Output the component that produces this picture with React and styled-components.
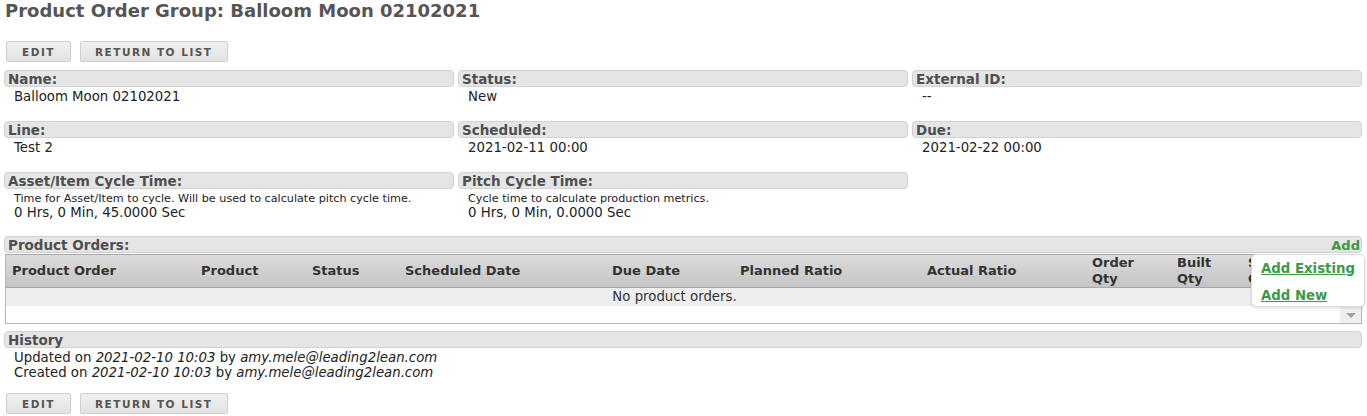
import React from "react";
import styled, { createGlobalStyle } from "styled-components";

const Global = createGlobalStyle`
  html, body { margin: 0; padding: 0; background: #fff; }
  body { font-family: "DejaVu Sans", Verdana, sans-serif; color: #222; }
`;

const Page = styled.div`
  padding: 0 5px 0 4px;
  width: 1358px;
`;

const Title = styled.h1`
  margin: 0;
  padding: 0 0 0 1px;
  font-size: 18px;
  line-height: 22px;
  font-weight: bold;
  color: #555;
`;

const ButtonBar = styled.div`
  display: flex;
  gap: 9px;
  padding-left: 2px;
  margin-top: ${(p) => p.$top}px;
`;

const Button = styled.button`
  height: 21px;
  padding: 0 ${(p) => p.$pad}px;
  border: 1px solid #cfcfcf;
  border-radius: 2px;
  background: linear-gradient(#f0f0f0, #e2e2e2);
  font-family: "DejaVu Sans", Verdana, sans-serif;
  font-size: 10.5px;
  font-weight: bold;
  letter-spacing: 1.5px;
  color: #555;
  cursor: pointer;
`;

const FieldGrid = styled.div`
  display: grid;
  grid-template-columns: repeat(3, 450px);
  column-gap: 4px;
  row-gap: 16px;
  margin-top: 8px;
`;

const Field = styled.div`
  display: flex;
  flex-direction: column;
`;

const Label = styled.div`
  height: 17px;
  box-sizing: border-box;
  border: 1px solid #d2d2d2;
  border-radius: 4px;
  background: #e5e5e5;
  padding: 1px 0 0 3px;
  font-size: 13.5px;
  font-weight: bold;
  line-height: 15px;
  color: #4f4f4f;
  display: flex;
  align-items: center;
  justify-content: space-between;
`;

const Hint = styled.div`
  padding-left: 10px;
  margin-top: 3px;
  font-size: 11.2px;
  line-height: 13px;
  color: #222;
`;

const Value = styled.div`
  padding-left: 10px;
  font-size: 13.3px;
  line-height: 16px;
  color: #222;
  margin-top: ${(p) => (p.$tight ? 0 : 2)}px;
`;

const Section = styled.div`
  position: relative;
  margin-top: ${(p) => p.$top}px;
`;

const AddLink = styled.span`
  color: #3a9a4a;
  font-weight: bold;
  font-size: 13px;
  padding-right: 1px;
  cursor: pointer;
`;

const TableBox = styled.div`
  margin-top: 1px;
  border-left: 1px solid #b5b5b5;
  border-right: 1px solid #b5b5b5;
  border-bottom: 1px solid #b5b5b5;
  margin-left: 1px;
`;

const cols = "189px 111px 93px 207px 128px 187px 165px 85px 71px 1fr";

const HeadRow = styled.div`
  display: grid;
  grid-template-columns: ${cols};
  height: 34px;
  box-sizing: border-box;
  border-top: 1px solid #a8a8a8;
  border-bottom: 1px solid #a8a8a8;
  background: linear-gradient(#dcdcdc, #c4c4c4);
`;

const HeadCell = styled.div`
  padding-left: 6px;
  display: flex;
  align-items: center;
  font-size: 13px;
  font-weight: bold;
  line-height: 16px;
  color: #333;
`;

const EmptyRow = styled.div`
  height: 19px;
  box-sizing: border-box;
  background: #eee;
  border-bottom: 1px solid #fff;
  padding-right: 18px;
  text-align: center;
  font-size: 13.3px;
  line-height: 18px;
  color: #333;
`;

const Filler = styled.div`
  height: 16px;
  display: flex;
  justify-content: flex-end;
`;

const ScrollBtn = styled.div`
  width: 21px;
  background: #efefef;
  display: flex;
  align-items: center;
  justify-content: center;
`;

const Arrow = styled.div`
  width: 0;
  height: 0;
  border-left: 5px solid transparent;
  border-right: 5px solid transparent;
  border-top: 5px solid #a3a3a3;
`;

const Menu = styled.div`
  position: absolute;
  top: 18px;
  right: -3px;
  width: 114px;
  height: 53px;
  box-sizing: border-box;
  background: #fff;
  border: 1px solid #dcdcdc;
  border-radius: 5px;
  box-shadow: 0 1px 3px rgba(0, 0, 0, 0.12);
  padding: 6px 0 0 9px;
  display: flex;
  flex-direction: column;
  gap: 11px;
`;

const MenuItem = styled.a`
  color: #3a9a4a;
  font-weight: bold;
  font-size: 13.3px;
  line-height: 16px;
  text-decoration: underline;
  cursor: pointer;
`;

const History = styled.div`
  padding-top: 2px;
`;

const HistLine = styled.div`
  padding-left: 10px;
  font-size: 13.3px;
  line-height: 15px;
  color: #222;
  & i { font-style: italic; }
`;

const fields = [
  { label: "Name:", value: "Balloom Moon 02102021" },
  { label: "Status:", value: "New" },
  { label: "External ID:", value: "--" },
  { label: "Line:", value: "Test 2" },
  { label: "Scheduled:", value: "2021-02-11 00:00" },
  { label: "Due:", value: "2021-02-22 00:00" },
  {
    label: "Asset/Item Cycle Time:",
    hint: "Time for Asset/Item to cycle. Will be used to calculate pitch cycle time.",
    value: "0 Hrs, 0 Min, 45.0000 Sec",
  },
  {
    label: "Pitch Cycle Time:",
    hint: "Cycle time to calculate production metrics.",
    value: "0 Hrs, 0 Min, 0.0000 Sec",
  },
];

const heads = [
  "Product Order",
  "Product",
  "Status",
  "Scheduled Date",
  "Due Date",
  "Planned Ratio",
  "Actual Ratio",
  ["Order", "Qty"],
  ["Built", "Qty"],
  ["Scrap", "Qty"],
];

function Buttons({ top }) {
  return (
    <ButtonBar $top={top}>
      <Button $pad={15}>EDIT</Button>
      <Button $pad={14}>RETURN TO LIST</Button>
    </ButtonBar>
  );
}

export default function App() {
  return (
    <>
      <Global />
      <Page>
        <Title>Product Order Group: Balloom Moon 02102021</Title>
        <Buttons top={19} />
        <FieldGrid>
          {fields.map((f) => (
            <Field key={f.label}>
              <Label>{f.label}</Label>
              {f.hint && <Hint>{f.hint}</Hint>}
              <Value $tight={!!f.hint}>{f.value}</Value>
            </Field>
          ))}
        </FieldGrid>
        <Section $top={15}>
          <Label>
            Product Orders:
            <AddLink>Add</AddLink>
          </Label>
          <TableBox>
            <HeadRow>
              {heads.map((h, i) => (
                <HeadCell key={i}>
                  {Array.isArray(h) ? (
                    <span>
                      {h[0]}
                      <br />
                      {h[1]}
                    </span>
                  ) : (
                    h
                  )}
                </HeadCell>
              ))}
            </HeadRow>
            <EmptyRow>No product orders.</EmptyRow>
            <Filler>
              <ScrollBtn>
                <Arrow />
              </ScrollBtn>
            </Filler>
          </TableBox>
          <Menu>
            <MenuItem>Add Existing</MenuItem>
            <MenuItem>Add New</MenuItem>
          </Menu>
        </Section>
        <Section $top={7}>
          <Label>History</Label>
          <History>
            <HistLine>
              Updated on <i>2021-02-10 10:03</i> by <i>amy.mele@leading2lean.com</i>
            </HistLine>
            <HistLine>
              Created on <i>2021-02-10 10:03</i> by <i>amy.mele@leading2lean.com</i>
            </HistLine>
          </History>
        </Section>
        <Buttons top={13} />
      </Page>
    </>
  );
}
